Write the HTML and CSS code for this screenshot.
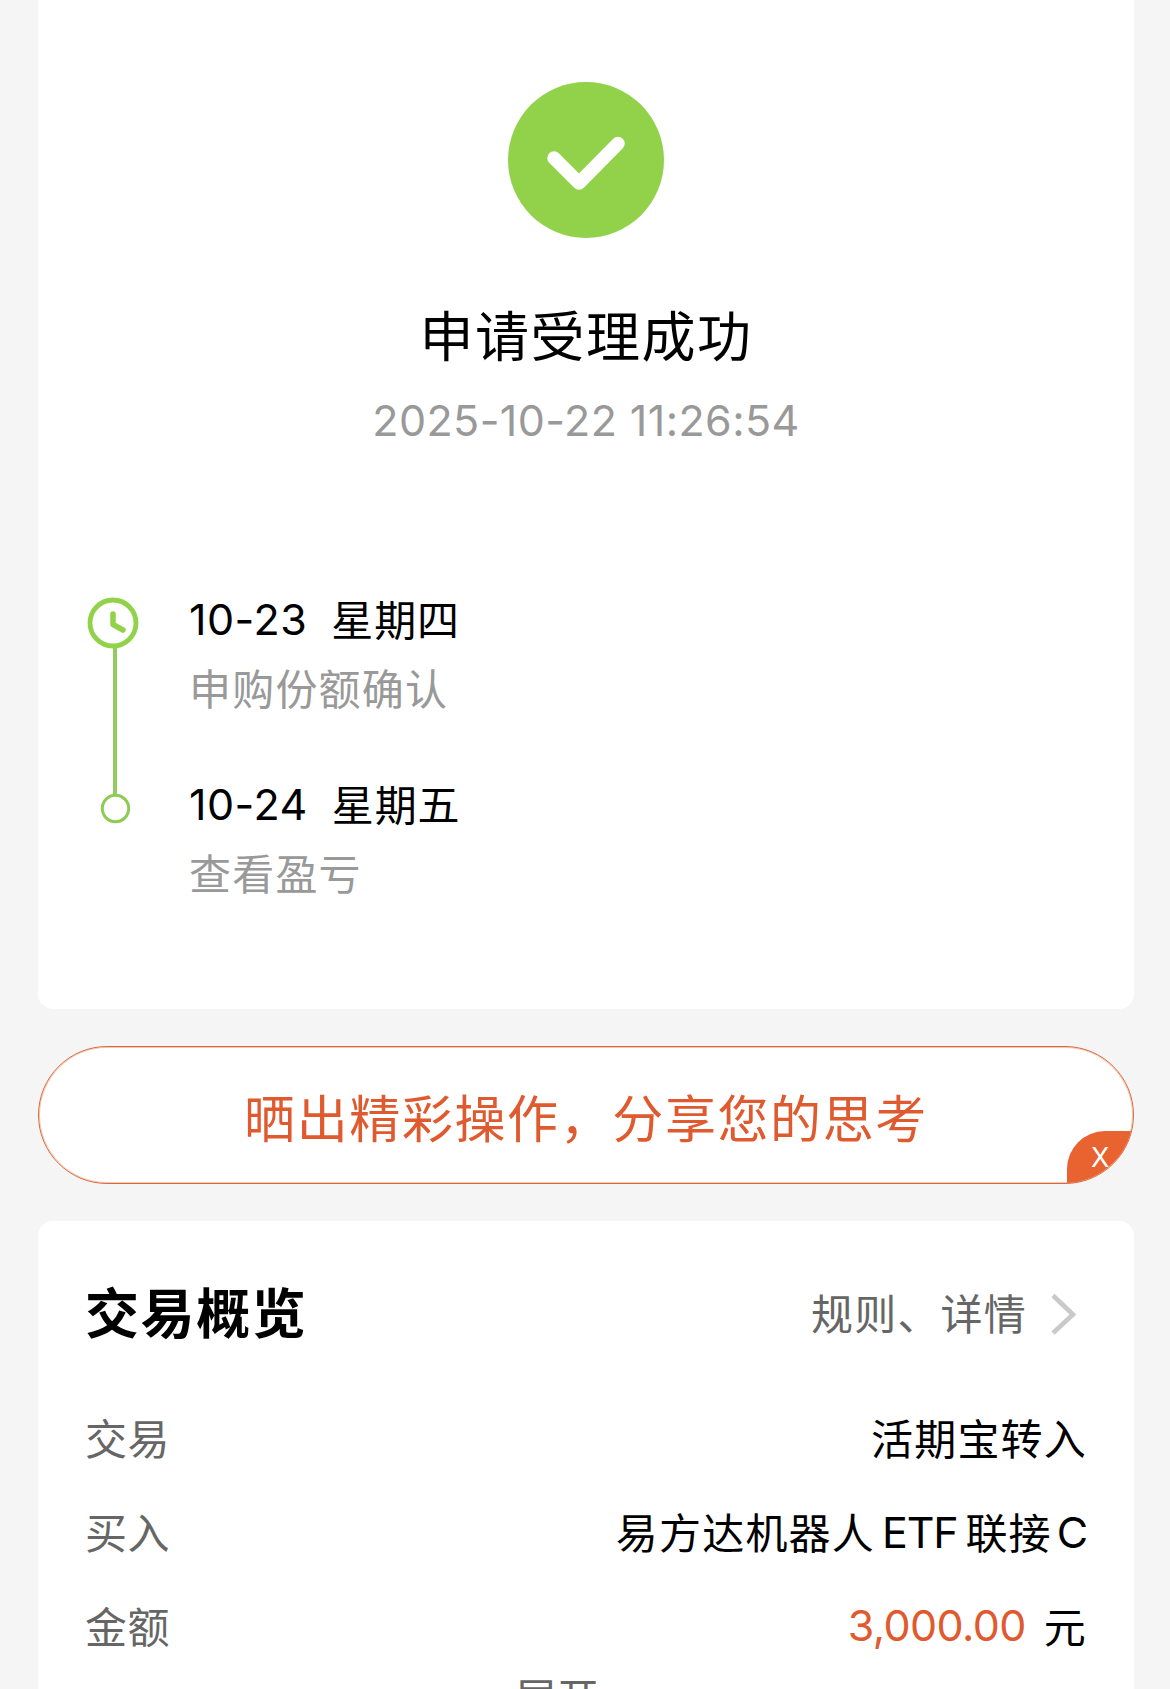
FILE: index.html
```html
<!DOCTYPE html>
<html lang="zh-CN">
<head>
<meta charset="utf-8">
<title>申请受理成功</title>
<link rel="stylesheet" href="styles.css">
</head>
<body>
<main class="page">
  <section class="card result">
    <svg class="result-icon" viewBox="0 0 156 156" aria-hidden="true">
      <circle cx="78" cy="78" r="78" fill="#92d24a"/>
      <path d="M46 76 L71 101 L110 61.500" fill="none" stroke="#fff" stroke-width="13.500" stroke-linecap="round" stroke-linejoin="round"/>
    </svg>
    <h1 class="result-title">申请受理成功</h1>
    <time class="result-time">2025-10-22 11:26:54</time>
    <div class="timeline">
      <svg class="rail" viewBox="0 0 52 240" aria-hidden="true">
        <path d="M28 58 V206" stroke="#92ca5c" stroke-width="4"/>
        <circle cx="26" cy="34" r="23" fill="none" stroke="#92d24a" stroke-width="4.800"/>
        <path d="M26 25 V35.500 L36 41" fill="none" stroke="#92d24a" stroke-width="5.500" stroke-linecap="round" stroke-linejoin="round"/>
        <circle cx="28.500" cy="219.500" r="13.200" fill="#fff" stroke="#8fca55" stroke-width="3"/>
      </svg>
      <ol class="steps">
        <li class="step">
          <p class="step-date"><span class="day">10-23</span><span>星期四</span></p>
          <p class="step-note">申购份额确认</p>
        </li>
        <li class="step">
          <p class="step-date"><span class="day">10-24</span><span>星期五</span></p>
          <p class="step-note">查看盈亏</p>
        </li>
      </ol>
    </div>
  </section>

  <div class="share">
    <span class="share-text">晒出精彩操作，分享您的思考</span>
    <span class="share-close">X</span>
  </div>

  <section class="card overview">
    <header class="overview-head">
      <h2 class="overview-title">交易概览</h2>
      <a class="overview-link">规则、详情
        <svg class="chevron" viewBox="0 0 28 44" aria-hidden="true"><path d="M3 2.500 L23 21.500 L3 40" fill="none" stroke="#c9c9c9" stroke-width="4.600"/></svg>
      </a>
    </header>
    <dl class="rows">
      <div class="row"><dt>交易</dt><dd>活期宝转入</dd></div>
      <div class="row"><dt>买入</dt><dd>易方达机器人<span class="latin">ETF</span>联接<span class="latin">C</span></dd></div>
      <div class="row"><dt>金额</dt><dd><span class="amount">3,000.00</span>元</dd></div>
    </dl>
    <div class="expand">展开</div>
  </section>
</main>
</body>
</html>
```
FILE: styles.css
```css
* {
  box-sizing: border-box;
  margin: 0;
  padding: 0;
}

body {
  height: 1689px;
  overflow: hidden;
  background: #f5f5f5;
  color: #000;
  font-family: Inter, "Noto Sans CJK SC", sans-serif;
  font-size: 42px;
  letter-spacing: 1.2px;
}

.page {
  display: flex;
  flex-direction: column;
  gap: 37px;
  padding: 0 36px 0 38px;
}

.card {
  background: #fff;
  border-radius: 15px;
}

.result {
  display: flex;
  flex-direction: column;
  align-items: center;
  height: 1009px;
  padding-top: 82px;
  border-radius: 0 0 15px 15px;
}

.result-icon {
  width: 156px;
  height: 156px;
}

.result-title {
  margin-top: 60px;
  font-size: 54px;
  font-weight: 400;
  line-height: 80px;
  letter-spacing: 1.5px;
}

.result-time {
  margin-top: 12px;
  color: #999;
  font-size: 43px;
  line-height: 60px;
  letter-spacing: 0.42px;
}

.timeline {
  display: flex;
  align-self: stretch;
  gap: 50px;
  margin-top: 139px;
  padding-left: 49px;
}

.rail {
  width: 52px;
  height: 240px;
}

.steps {
  display: flex;
  flex-direction: column;
  gap: 56px;
  padding-top: 2px;
  list-style: none;
}

.step {
  display: flex;
  flex-direction: column;
  gap: 9px;
  line-height: 60px;
}

.step-date {
  display: flex;
  gap: 24px;
  letter-spacing: 0.9px;
}

.day {
  font-size: 43px;
  line-height: 56px;
  letter-spacing: 0.5px;
}

.step-note {
  color: #999;
}

.share {
  position: relative;
  display: flex;
  align-items: center;
  justify-content: center;
  height: 138px;
  padding-top: 10px;
  overflow: hidden;
  border: 1px solid #d9693c;
  border-radius: 69px;
  background: #fff;
  box-shadow: inset 0 0 0 1px #f3c9b6;
}

.share-text {
  color: #df5a2e;
  font-size: 51px;
  line-height: 70px;
  letter-spacing: 1.6px;
}

.share-close {
  position: absolute;
  right: -1px;
  bottom: -1px;
  width: 67px;
  height: 53px;
  padding-left: 24px;
  border-radius: 38px 0 0 0;
  background: #e8632f;
  color: #fff;
  font-size: 27px;
  font-weight: 400;
  line-height: 53px;
  letter-spacing: 0;
}

.overview {
  height: 520px;
  padding: 54px 47px 0 47px;
}

.overview-head {
  display: flex;
  justify-content: space-between;
  line-height: 80px;
}

.overview-title {
  font-size: 54px;
  font-weight: 700;
  letter-spacing: 1.6px;
}

.overview-link {
  display: flex;
  align-items: center;
  gap: 23px;
  padding-right: 9px;
  color: #666;
}

.chevron {
  width: 28px;
  height: 44px;
}

.rows {
  margin-top: 38px;
}

.row {
  display: flex;
  justify-content: space-between;
  height: 94px;
  line-height: 94px;
}

.row dt {
  color: #666;
  letter-spacing: 0.4px;
}

.latin {
  margin: 0 8px 0 7px;
  font-size: 43px;
  line-height: 1;
  letter-spacing: -1.2px;
  vertical-align: 1px;
}

.latin:last-child {
  margin: 0 0 0 5px;
}

.amount {
  margin-right: 18px;
  color: #df5a2e;
  font-size: 43px;
  line-height: 1;
  letter-spacing: -0.6px;
  vertical-align: 2px;
}

.expand {
  padding-right: 58px;
  color: #666;
  line-height: 48px;
  letter-spacing: 0.4px;
  text-align: center;
}
```
